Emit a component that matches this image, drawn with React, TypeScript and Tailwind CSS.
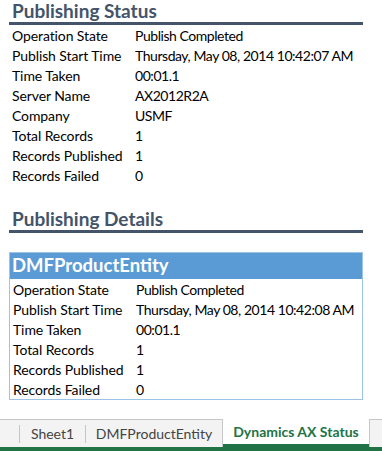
const statusRows: [string, string][] = [
  ["Operation State", "Publish Completed"],
  ["Publish Start Time", "Thursday, May 08, 2014 10:42:07 AM"],
  ["Time Taken", "00:01.1"],
  ["Server Name", "AX2012R2A"],
  ["Company", "USMF"],
  ["Total Records", "1"],
  ["Records Published", "1"],
  ["Records Failed", "0"],
];

const detailRows: [string, string][] = [
  ["Operation State", "Publish Completed"],
  ["Publish Start Time", "Thursday, May 08, 2014 10:42:08 AM"],
  ["Time Taken", "00:01.1"],
  ["Total Records", "1"],
  ["Records Published", "1"],
  ["Records Failed", "0"],
];

function Row({ label, value }: { label: string; value: string }) {
  return (
    <div className="flex h-[20px] items-center whitespace-nowrap text-[14px] text-black">
      <div className="w-[126px] pl-[3px] tracking-[-0.1px]">{label}</div>
      <div className="tracking-[-0.45px]">{value}</div>
    </div>
  );
}

function SectionTitle({ title }: { title: string }) {
  return (
    <div className="border-b-[3px] border-[#44546a] pl-[3px] text-[19px] font-bold leading-[22px] text-[#44546a]">
      {title}
    </div>
  );
}

export default function App() {
  return (
    <div
      className="relative flex h-[451px] w-[382px] flex-col overflow-hidden bg-white"
      style={{ fontFamily: "Lato, 'Open Sans', sans-serif" }}
    >
      <div className="w-[363px] pl-[9px]">
        <SectionTitle title="Publishing Status" />
        {statusRows.map(([l, v]) => (
          <Row key={l} label={l} value={v} />
        ))}
        <div className="mt-[23px]">
          <SectionTitle title="Publishing Details" />
        </div>
        <div className="mt-[19px] border border-[#9dc3e6]">
          <div className="flex h-[26px] items-center bg-[#5b9bd5] pl-[2px] text-[18.5px] font-bold text-white">
            DMFProductEntity
          </div>
          {detailRows.map(([l, v]) => (
            <Row key={l} label={l} value={v} />
          ))}
        </div>
      </div>

      <div className="mt-auto flex h-[32px] flex-col">
        <div className="flex h-[28px] items-stretch border-t border-[#c6c6c6] bg-[#f3f3f3] text-[14px]">
          <div className="w-[20px] self-center">
            <div className="ml-auto h-[18px] w-px bg-[#c6c6c6]" />
          </div>
          <div className="flex w-[65px] items-center justify-center text-[#444]">Sheet1</div>
          <div className="my-auto h-[18px] w-px bg-[#c6c6c6]" />
          <div className="flex w-[136px] items-center justify-center text-[#444]">DMFProductEntity</div>
          <div className="-mt-px flex w-[148px] items-center justify-center border-x border-[#c6c6c6] bg-white">
            <div className="flex h-full w-full items-center justify-center border-b-[3px] border-[#217346] font-bold text-[#217346]">
              Dynamics AX Status
            </div>
          </div>
        </div>
        <div className="h-[4px] bg-[#217346]" />
      </div>
    </div>
  );
}
